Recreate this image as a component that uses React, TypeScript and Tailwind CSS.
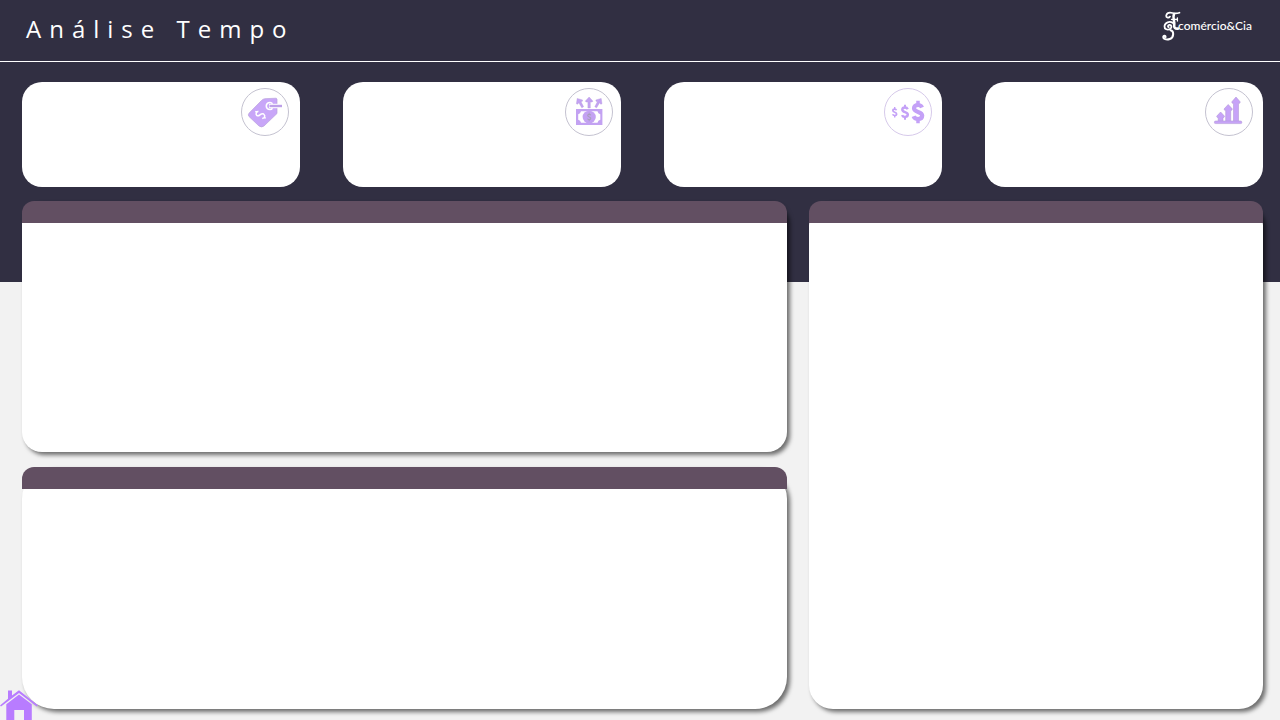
import type { ReactNode } from "react";

const DOLLAR_S =
  "M4 -4.5C3.2 -6.3 1.7 -7 0 -7C-2.4 -7 -4 -5.7 -4 -3.7C-4 .8 4.2 -1 4.2 3.6C4.2 5.8 2.4 7 0 7C-2.1 7 -3.7 6.2 -4.4 4.3";

type DollarProps = { x: number; y: number; scale: number; rotate?: number; color?: string; weight?: number };

function Dollar({ x, y, scale, rotate = 0, color = "#c4a1f7", weight = 3.7 }: DollarProps) {
  return (
    <g transform={`translate(${x} ${y}) rotate(${rotate}) scale(${scale})`} fill="none" stroke={color}>
      <path d={DOLLAR_S} strokeWidth={weight} />
      <path d="M0 -11.3V-6M0 6V11.3" strokeWidth={weight - 0.7} />
    </g>
  );
}

function IconCircle({ ring, children }: { ring: string; children: ReactNode }) {
  return (
    <svg viewBox="0 0 48 48" className="size-12 shrink-0" aria-hidden="true">
      <circle cx="24" cy="24" r="23.5" fill="#fff" stroke={ring} />
      {children}
    </svg>
  );
}

function TagIcon() {
  return (
    <IconCircle ring="#c4c2d0">
      <path
        d="M24 10.7L35.2 10.2L36 11V25.5L23 38Q20.5 39.8 18 38L8 28.5Q6.6 26.8 8.2 25L20.5 12.5Q22 10.9 24 10.7Z"
        fill="#c8a6f8"
        stroke="#b9a2dc"
        strokeWidth=".7"
      />
      <path d="M31.5 15.8A3.5 3.5 0 1 0 31.5 20.2" fill="none" stroke="#fff" strokeWidth="1.6" />
      <path d="M28 15.8H41V20.2H28Z" fill="#fff" />
      <path d="M28.5 16.8H41V19.2H28.5Z" fill="#bda0e8" />
      <path
        d="M17.4 23.2C15.2 23.6 14.4 25.9 15.8 27.4C18.2 29.6 19.6 24.2 22.6 26C24.8 27.6 23.6 30.3 21.2 30.6M15.6 24.3L14.4 23.2M23.4 29.3L24.6 30.4"
        fill="none"
        stroke="#fff"
        strokeWidth="1.5"
      />
    </IconCircle>
  );
}

function MoneyIcon() {
  return (
    <IconCircle ring="#c4c2d0">
      <path d="M11 21H37.4V37H11Z" fill="#c3a2f2" />
      <path
        d="M16 23.3H32.5Q33 25.7 35.3 26.2V31.8Q33 32.3 32.5 34.7H16Q15.5 32.3 13.2 31.8V26.2Q15.5 25.7 16 23.3Z"
        fill="#fff"
      />
      <ellipse cx="24.2" cy="29" rx="6.6" ry="6.3" fill="#c3a2f2" />
      <Dollar x={24.2} y={29} scale={0.38} color="#aaa0bd" weight={3} />
      <g fill="#c3a2f2" stroke="#b69bdf" strokeWidth=".4">
        <path d="M24.1 9L28 13.2L26.9 14H25.3V20H22.9V14H21.3L20.2 13.2Z" />
        <path d="M12.2 10.4L17.6 12L17.2 13.4L15.9 13.6L18.6 18.7L16.8 19.8L13.8 14.7L12.7 16.2L11.4 15.8Z" />
        <path d="M36.2 10.4L30.8 12L31.2 13.4L32.5 13.6L29.8 18.7L31.6 19.8L34.6 14.7L35.7 16.2L37 15.8Z" />
      </g>
    </IconCircle>
  );
}

function DollarsIcon() {
  return (
    <IconCircle ring="#d6c9ea">
      <Dollar x={10.7} y={24.3} scale={0.46} />
      <Dollar x={21} y={24.2} scale={0.67} />
      <Dollar x={34} y={24} scale={1} weight={4.2} />
    </IconCircle>
  );
}

function GrowthIcon() {
  return (
    <IconCircle ring="#c4c2d0">
      <g fill="#c7a3f8" stroke="#b49bd8" strokeWidth=".6">
        <path d="M31 9L35.3 14L34.6 15.3H33.5V34H28.5V15.3H27.4L26.7 14Z" />
        <path d="M23.2 16.5L27.4 21L26.7 22.3H25.7V34H20.7V22.3H19.7L19 21Z" />
        <path d="M15.6 24L19.6 28.3L18.9 29.5H18V34H13.2V29.5H12.3L11.6 28.3Z" />
        <rect x="9.4" y="33" width="27.4" height="2.6" rx="1.2" />
      </g>
    </IconCircle>
  );
}

function Logo() {
  return (
    <div className="flex items-center text-white">
      <svg viewBox="0 0 20 30" className="h-[30px] w-5 shrink-0" fill="none" stroke="currentColor" strokeLinecap="round" aria-hidden="true">
        <path d="M8 5.6C6.5 7.8 3.7 6.4 4.3 4.2C5 1.8 8 1.4 10.5 2C13 2.7 15 2.5 17.5 1.7" strokeWidth="1.7" />
        <path d="M12 3C10.3 6.5 12.8 10 12.2 14C11.8 16.5 13 18 16 17.6" strokeWidth="2.6" />
        <path d="M9.5 8.4H15.4M15.4 7V10" strokeWidth="1.3" />
        <path d="M11 12C7.5 9.8 3 11.4 2.5 15C2.2 18.2 5.5 19.5 8 18C10.4 16.6 9.5 13.5 7.2 13.9C5.7 14.2 5.6 15.8 6.7 16.2" strokeWidth="1.8" />
        <path d="M8.5 19.2C12.3 20 12 26.5 7.8 28C4.2 29.3 1 27.8 1.3 25.8C1.6 24.2 3.7 24.5 3.5 26" strokeWidth="2" />
      </svg>
      <span className="-ml-1 font-[Lato,sans-serif] text-xs leading-4 font-medium">comércio&amp;Cia</span>
    </div>
  );
}

const cards = [
  { id: "preco", icon: <TagIcon />, pad: "pr-[11px]" },
  { id: "receita", icon: <MoneyIcon />, pad: "pr-2" },
  { id: "valores", icon: <DollarsIcon />, pad: "pr-[10px]" },
  { id: "crescimento", icon: <GrowthIcon />, pad: "pr-[10px]" },
];

function Panel({ place, radius }: { place: string; radius: string }) {
  return (
    <section className={`flex flex-col bg-white shadow-[3px_3px_4px_rgba(0,0,0,0.55)] ${place} ${radius}`}>
      <header className="h-[22px] rounded-t-xl bg-[#624f62]" />
    </section>
  );
}

export default function App() {
  return (
    <div className="relative flex min-h-screen flex-col bg-[#f2f2f2] bg-[linear-gradient(#312f42,#312f42)] bg-[length:100%_282px] bg-no-repeat font-['Open_Sans',sans-serif]">
      <header className="flex h-[62px] items-start justify-between border-b border-white pt-[11px] pr-7 pl-[26px]">
        <h1 className="text-2xl leading-9 font-normal tracking-[8px] text-white">Análise Tempo</h1>
        <Logo />
      </header>
      <main className="flex flex-1 flex-col gap-[14px] pt-5 pr-[17px] pb-[11px] pl-[22px]">
        <div className="grid grid-cols-4 gap-[43px]">
          {cards.map((card) => (
            <article key={card.id} className={`flex h-[105px] justify-end rounded-[20px] bg-white pt-1.5 ${card.pad}`}>
              {card.icon}
            </article>
          ))}
        </div>
        <div className="grid flex-1 grid-cols-[765fr_454fr] grid-rows-[251fr_242fr] gap-x-[22px] gap-y-[15px]">
          <Panel place="col-start-1 row-start-1" radius="rounded-[20px]" />
          <Panel place="col-start-1 row-start-2" radius="rounded-[32px]" />
          <Panel place="col-start-2 row-span-2 row-start-1" radius="rounded-3xl" />
        </div>
      </main>
      <a href="#inicio" aria-label="Início" className="absolute bottom-0 left-0">
        <svg viewBox="0 0 38 30" className="h-[30px] w-[38px]" fill="#b87cff" aria-hidden="true">
          <path d="M8 .5H12V5.5L19 .2L37.8 15.2L36.7 16.4L19 2.9L1 16.6L0 15.4L8 8.8Z" />
          <path d="M6.3 14.2L19 4.6L31.8 14.2V30H24V20H14.3V30H6.3Z" />
        </svg>
      </a>
    </div>
  );
}
